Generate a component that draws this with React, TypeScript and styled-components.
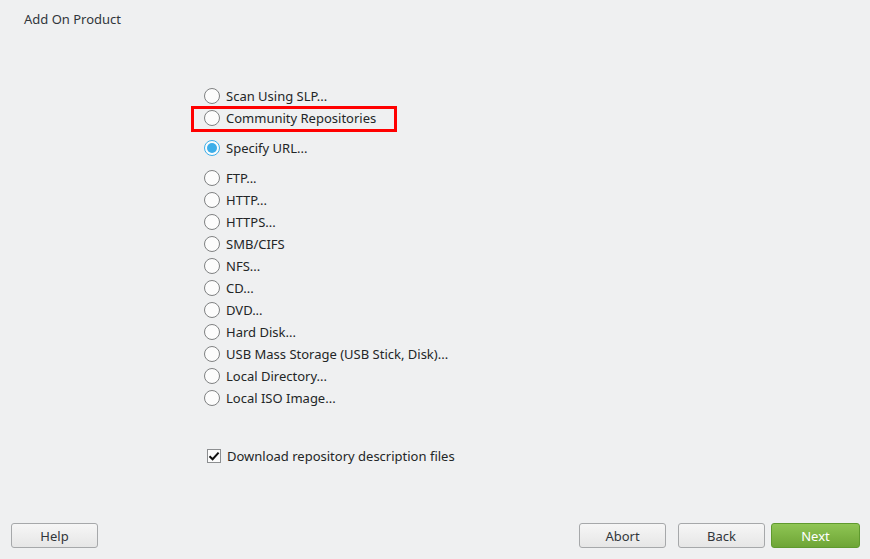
import React from "react";
import styled, { createGlobalStyle } from "styled-components";

const Global = createGlobalStyle`
  html, body { margin: 0; padding: 0; background: #eff0f1; }
  body { font-family: "Noto Sans", "Open Sans", sans-serif; font-size: 13px; color: #232627; }
`;

const Page = styled.div`
  width: 870px;
  height: 559px;
  display: flex;
  flex-direction: column;
  background: #eff0f1;
  overflow: hidden;
`;

const Title = styled.div`
  height: 38px;
  line-height: 38px;
  padding-left: 24px;
  color: #31363b;
`;

const Content = styled.div`
  flex: 1;
  display: flex;
  flex-direction: column;
  padding-left: 204px;
  padding-top: 47px;
`;

const Row = styled.label<{ $gapTop?: number }>`
  position: relative;
  display: flex;
  align-items: center;
  gap: 6px;
  height: 22px;
  margin-top: ${(p) => p.$gapTop ?? 0}px;
  white-space: nowrap;
`;

const Radio = styled.span<{ $checked?: boolean }>`
  box-sizing: border-box;
  width: 16px;
  height: 16px;
  border-radius: 50%;
  border: 1px solid ${(p) => (p.$checked ? "#3daee9" : "#7f8182")};
  background: #fcfcfc;
  display: flex;
  align-items: center;
  justify-content: center;
  &::after {
    content: "";
    display: ${(p) => (p.$checked ? "block" : "none")};
    width: 10px;
    height: 10px;
    border-radius: 50%;
    background: #3daee9;
  }
`;

const Highlight = styled.span`
  position: absolute;
  left: -13px;
  top: -1px;
  width: 206px;
  height: 26px;
  box-sizing: border-box;
  border: 3px solid #ff0000;
  pointer-events: none;
`;

const CheckRow = styled.label`
  display: flex;
  align-items: center;
  gap: 6px;
  height: 22px;
  margin-top: 36px;
  padding-left: 3px;
`;

const Check = styled.span`
  box-sizing: border-box;
  width: 14px;
  height: 14px;
  border: 1px solid #8c8e90;
  background: #fcfcfc;
  display: flex;
  align-items: center;
  justify-content: center;
`;

const Footer = styled.div`
  display: flex;
  align-items: center;
  padding: 0 10px 11px 11px;
`;

const Spacer = styled.div`
  flex: 1;
`;

const Button = styled.button<{ $primary?: boolean; $w?: number; $ml?: number }>`
  box-sizing: border-box;
  width: ${(p) => p.$w ?? 87}px;
  height: 25px;
  margin-left: ${(p) => p.$ml ?? 0}px;
  border-radius: 3px;
  font-family: "Noto Sans", "Open Sans", sans-serif;
  font-size: 13px;
  padding: 0;
  border: 1px solid ${(p) => (p.$primary ? "#5f9a2e" : "#a6a8aa")};
  color: ${(p) => (p.$primary ? "#ffffff" : "#31363b")};
  background: ${(p) =>
    p.$primary
      ? "linear-gradient(#8fc554, #6ea536)"
      : "linear-gradient(#f6f6f6, #e6e6e6)"};
`;

const options: { label: string; gap?: number; checked?: boolean; highlight?: boolean }[] = [
  { label: "Scan Using SLP..." },
  { label: "Community Repositories", highlight: true },
  { label: "Specify URL...", gap: 8, checked: true },
  { label: "FTP...", gap: 8 },
  { label: "HTTP..." },
  { label: "HTTPS..." },
  { label: "SMB/CIFS" },
  { label: "NFS..." },
  { label: "CD..." },
  { label: "DVD..." },
  { label: "Hard Disk..." },
  { label: "USB Mass Storage (USB Stick, Disk)..." },
  { label: "Local Directory..." },
  { label: "Local ISO Image..." },
];

export default function App() {
  return (
    <>
      <Global />
      <Page>
        <Title>Add On Product</Title>
        <Content>
          {options.map((o) => (
            <Row key={o.label} $gapTop={o.gap}>
              {o.highlight && <Highlight />}
              <Radio $checked={o.checked} />
              <span>{o.label}</span>
            </Row>
          ))}
          <CheckRow>
            <Check>
              <svg width="12" height="12" viewBox="0 0 12 12">
                <path d="M1.5 6.2 L4.6 9.2 L10.6 2.6" fill="none" stroke="#111" strokeWidth="2" />
              </svg>
            </Check>
            <span>Download repository description files</span>
          </CheckRow>
        </Content>
        <Footer>
          <Button>Help</Button>
          <Spacer />
          <Button>Abort</Button>
          <Button $ml={12}>Back</Button>
          <Button $primary $w={89} $ml={6}>Next</Button>
        </Footer>
      </Page>
    </>
  );
}
